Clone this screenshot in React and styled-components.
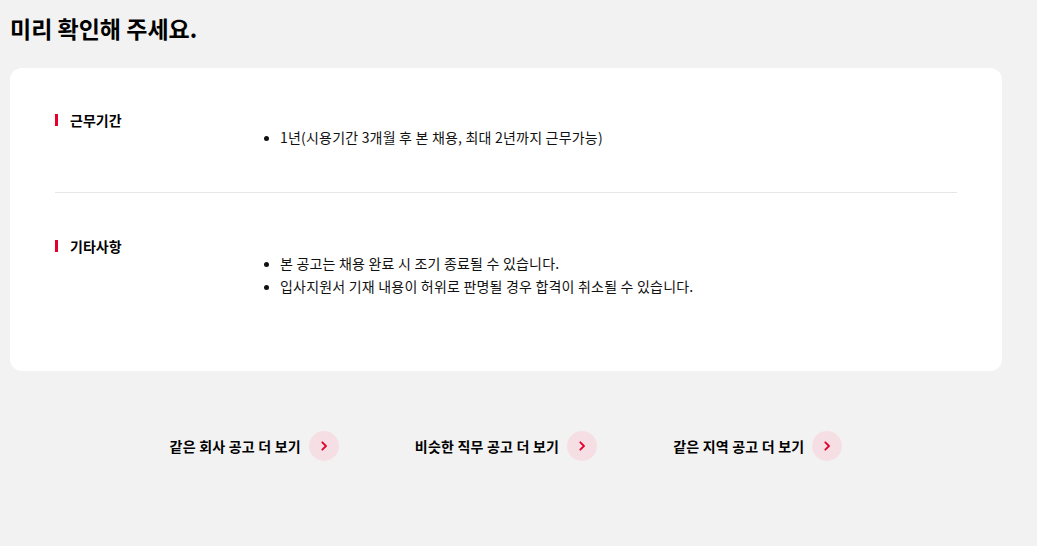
import * as React from 'react';
import styled, { createGlobalStyle } from 'styled-components';

const GlobalStyle = createGlobalStyle`
  html, body {
    margin: 0;
    padding: 0;
    background: #f2f2f2;
  }
  body {
    font-family: "Noto Sans CJK KR", "Noto Sans", sans-serif;
    color: #111;
  }
`;

const Page = styled.div`
  width: 992px;
  padding: 11px 0 40px 10px;
`;

const Title = styled.h2`
  margin: 0 0 23px;
  font-size: 23px;
  line-height: 34px;
  font-weight: 700;
  color: #000;
`;

const Card = styled.div`
  background: #fff;
  border-radius: 12px;
  padding: 0 45px;
`;

const Section = styled.div`
  display: flex;
  padding: ${({ $top }) => $top}px 0 ${({ $bottom }) => $bottom}px;
  border-top: ${({ $divider }) => ($divider ? '1px solid #e6e6e6' : 'none')};
`;

const Label = styled.div`
  display: flex;
  align-items: center;
  gap: 12px;
  width: 210px;
  flex-shrink: 0;
  font-size: 14px;
  line-height: 20px;
  font-weight: 700;
  color: #000;
  align-self: flex-start;

  &::before {
    content: '';
    display: block;
    width: 3px;
    height: 12px;
    background: #e4002b;
  }
`;

const List = styled.ul`
  margin: 16px 0;
  padding: 0 0 0 15px;
  font-size: 14px;
  line-height: 23px;
  letter-spacing: 0.2px;
  color: #111;

  li::marker {
    font-size: 12px;
  }
`;

const Links = styled.div`
  display: flex;
  justify-content: center;
  gap: 76px;
  margin-top: 60px;
`;

const MoreLink = styled.a`
  display: flex;
  align-items: center;
  gap: 8px;
  font-size: 14px;
  font-weight: 700;
  letter-spacing: 0.2px;
  color: #000;
  text-decoration: none;
`;

const Arrow = styled.span`
  display: flex;
  align-items: center;
  justify-content: center;
  width: 30px;
  height: 30px;
  border-radius: 50%;
  background: #f6dfe4;
  color: #e4002b;
`;

const Chevron = () => (
  <svg width="12" height="12" viewBox="0 0 12 12" fill="none">
    <path d="M4.3 2.3L8 6l-3.7 3.7" stroke="currentColor" strokeWidth="1.8" strokeLinecap="round" strokeLinejoin="round" />
  </svg>
);

const sections = [
  {
    label: '근무기간',
    items: ['1년(시용기간 3개월 후 본 채용, 최대 2년까지 근무가능)'],
    top: 42,
    bottom: 27,
  },
  {
    label: '기타사항',
    items: [
      '본 공고는 채용 완료 시 조기 종료될 수 있습니다.',
      '입사지원서 기재 내용이 허위로 판명될 경우 합격이 취소될 수 있습니다.',
    ],
    top: 43,
    bottom: 57,
  },
];

const links = ['같은 회사 공고 더 보기', '비슷한 직무 공고 더 보기', '같은 지역 공고 더 보기'];

export default function App() {
  return (
    <>
      <GlobalStyle />
      <Page>
        <Title>미리 확인해 주세요.</Title>
        <Card>
          {sections.map((s, i) => (
            <Section key={s.label} $top={s.top} $bottom={s.bottom} $divider={i > 0}>
              <Label>{s.label}</Label>
              <List>
                {s.items.map((item) => (
                  <li key={item}>{item}</li>
                ))}
              </List>
            </Section>
          ))}
        </Card>
        <Links>
          {links.map((text) => (
            <MoreLink key={text} href="#">
              {text}
              <Arrow>
                <Chevron />
              </Arrow>
            </MoreLink>
          ))}
        </Links>
      </Page>
    </>
  );
}
